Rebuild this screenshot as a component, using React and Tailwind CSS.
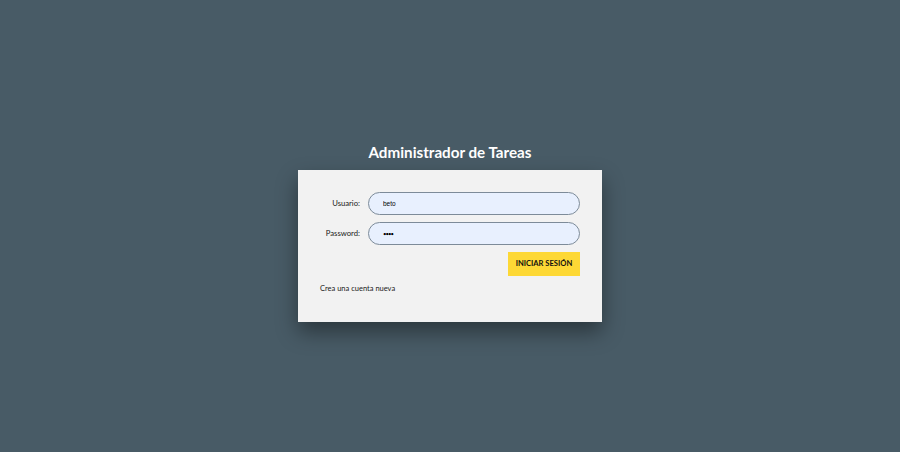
export default function App() {
  return (
    <div className="w-full h-[452px] bg-[#485b66] flex flex-col items-center pt-[142px] font-['Lato','Liberation_Sans',sans-serif]">
      <h1 className="text-[15.2px] leading-[20px] font-bold text-white mb-[8px]">Administrador de Tareas</h1>
      <div className="w-[304px] h-[152px] bg-[#f2f2f2] px-[22px] pt-[22px] shadow-[0_10px_20px_rgba(0,0,0,0.4)]">
        <form className="flex flex-col gap-[7px]">
          <div className="flex items-center">
            <label className="flex-1 text-right pr-[8px] text-[7.7px] text-[#1a1a1a]">Usuario:</label>
            <input
              defaultValue="beto"
              className="w-[212px] h-[23px] rounded-full border border-[#7d8b99] bg-[#e8f0fe] pl-[14px] text-[6.5px] text-black font-['Liberation_Sans',sans-serif] outline-none"
            />
          </div>
          <div className="flex items-center">
            <label className="flex-1 text-right pr-[8px] text-[7.7px] text-[#1a1a1a]">Password:</label>
            <input
              type="password"
              defaultValue="beto"
              className="w-[212px] h-[23px] rounded-full border border-[#7d8b99] bg-[#e8f0fe] pl-[14px] text-[6px] tracking-[-1px] text-black outline-none"
            />
          </div>
          <div className="flex justify-end">
            <button type="button" className="w-[72px] h-[24px] bg-[#fdd835] text-[7.6px] font-bold text-[#111] uppercase">
              Iniciar Sesión
            </button>
          </div>
        </form>
        <a href="#" className="block mt-[7px] text-[7.5px] text-[#1a1a1a]">Crea una cuenta nueva</a>
      </div>
    </div>
  )
}
